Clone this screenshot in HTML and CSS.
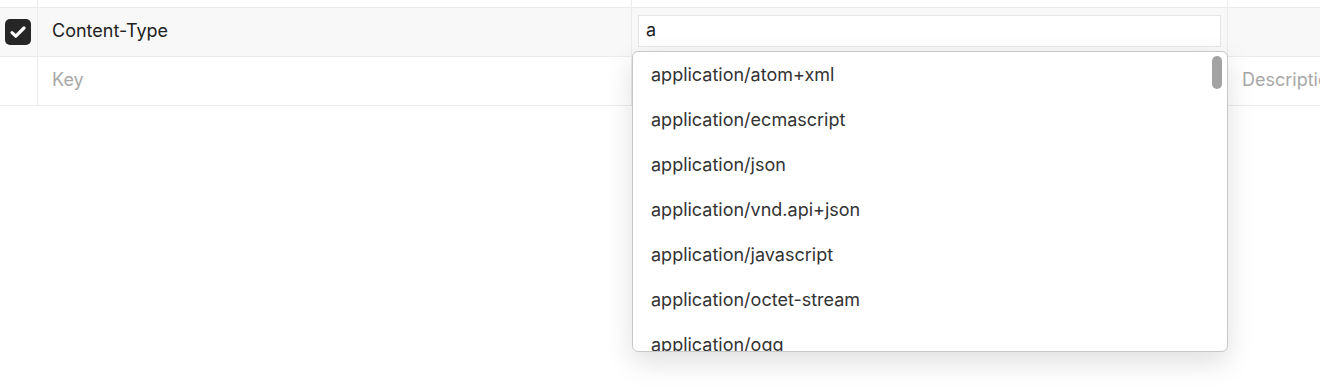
FILE: index.html
```html
<!DOCTYPE html>
<html>

<head>
  <meta charset="utf-8">
  <meta name="viewport" content="width=device-width">
  <title>Headers</title>
  <link rel="stylesheet" href="styles.css">
</head>

<body>
  <div class="kv-table">
    <div class="kv-row kv-row-top">
      <div class="kv-cell kv-toggle"></div>
      <div class="kv-cell"></div>
      <div class="kv-cell"></div>
      <div class="kv-cell"></div>
    </div>
    <div class="kv-row kv-row-active">
      <div class="kv-cell kv-toggle">
        <span class="checkbox">
          <svg width="20" height="20" viewBox="0 0 20 20"><path d="M4 10.6l3.8 3.6L16 6" fill="none" stroke="#fff" stroke-width="3.2" stroke-linecap="round" stroke-linejoin="round"/></svg>
        </span>
      </div>
      <div class="kv-cell kv-text">Content-Type</div>
      <div class="kv-cell kv-value">
        <input class="kv-input" type="text" value="a">
        <div class="autocomplete">
          <ul class="autocomplete-list">
            <li>application/atom+xml</li>
            <li>application/ecmascript</li>
            <li>application/json</li>
            <li>application/vnd.api+json</li>
            <li>application/javascript</li>
            <li>application/octet-stream</li>
            <li>application/ogg</li>
          </ul>
          <div class="scroll-thumb"></div>
        </div>
      </div>
      <div class="kv-cell"></div>
    </div>
    <div class="kv-row">
      <div class="kv-cell kv-toggle"></div>
      <div class="kv-cell kv-text placeholder">Key</div>
      <div class="kv-cell"></div>
      <div class="kv-cell kv-text placeholder">Description</div>
    </div>
  </div>
</body>

</html>
```

FILE: styles.css
```css
html,
body {
  margin: 0;
  height: 100%;
  background: #fff;
  font-family: Inter, "Noto Sans", sans-serif;
  color: #222;
  overflow: hidden;
}

.kv-table {
  display: flex;
  flex-direction: column;
}

.kv-row {
  display: grid;
  grid-template-columns: 38px 594px 596px 1fr;
  height: 48px;
  border-bottom: 1px solid #ebebeb;
}

.kv-row-top {
  height: 7px;
}

.kv-row-active {
  background: #f8f8f8;
}

.kv-cell {
  border-right: 1px solid #ebebeb;
  display: flex;
  align-items: center;
  min-width: 0;
  white-space: nowrap;
  overflow: hidden;
}

.kv-cell:last-child {
  border-right: none;
}

.kv-toggle {
  justify-content: center;
  padding-right: 1px;
}

.checkbox {
  width: 26px;
  height: 26px;
  border-radius: 5px;
  background: #262626;
  display: flex;
  align-items: center;
  justify-content: center;
}

.kv-text {
  padding-left: 14px;
  padding-bottom: 4px;
  font-size: 18px;
}

.placeholder {
  color: #a8a8a8;
}

.kv-value {
  position: relative;
  overflow: visible;
  padding: 0 6px 2px;
}

.kv-input {
  width: 100%;
  height: 32px;
  box-sizing: border-box;
  border: 1px solid #e6e6e6;
  background: #fff;
  font-family: inherit;
  font-size: 18px;
  color: #222;
  padding: 0 7px 3px;
  outline: none;
}

.autocomplete {
  position: absolute;
  top: 43px;
  left: 0;
  width: 596px;
  height: 301px;
  box-sizing: border-box;
  background: #fff;
  border: 1px solid #c8c8c8;
  border-radius: 6px;
  box-shadow: 0 10px 28px rgba(0, 0, 0, 0.13);
  overflow: hidden;
  z-index: 2;
}

.autocomplete-list {
  list-style: none;
  margin: 0;
  padding: 0;
}

.autocomplete-list li {
  height: 45px;
  line-height: 45px;
  padding-left: 18px;
  font-size: 18px;
  color: #333;
}

.scroll-thumb {
  position: absolute;
  top: 4px;
  right: 5px;
  width: 10px;
  height: 33px;
  border-radius: 5px;
  background: #a3a3a3;
}
```
